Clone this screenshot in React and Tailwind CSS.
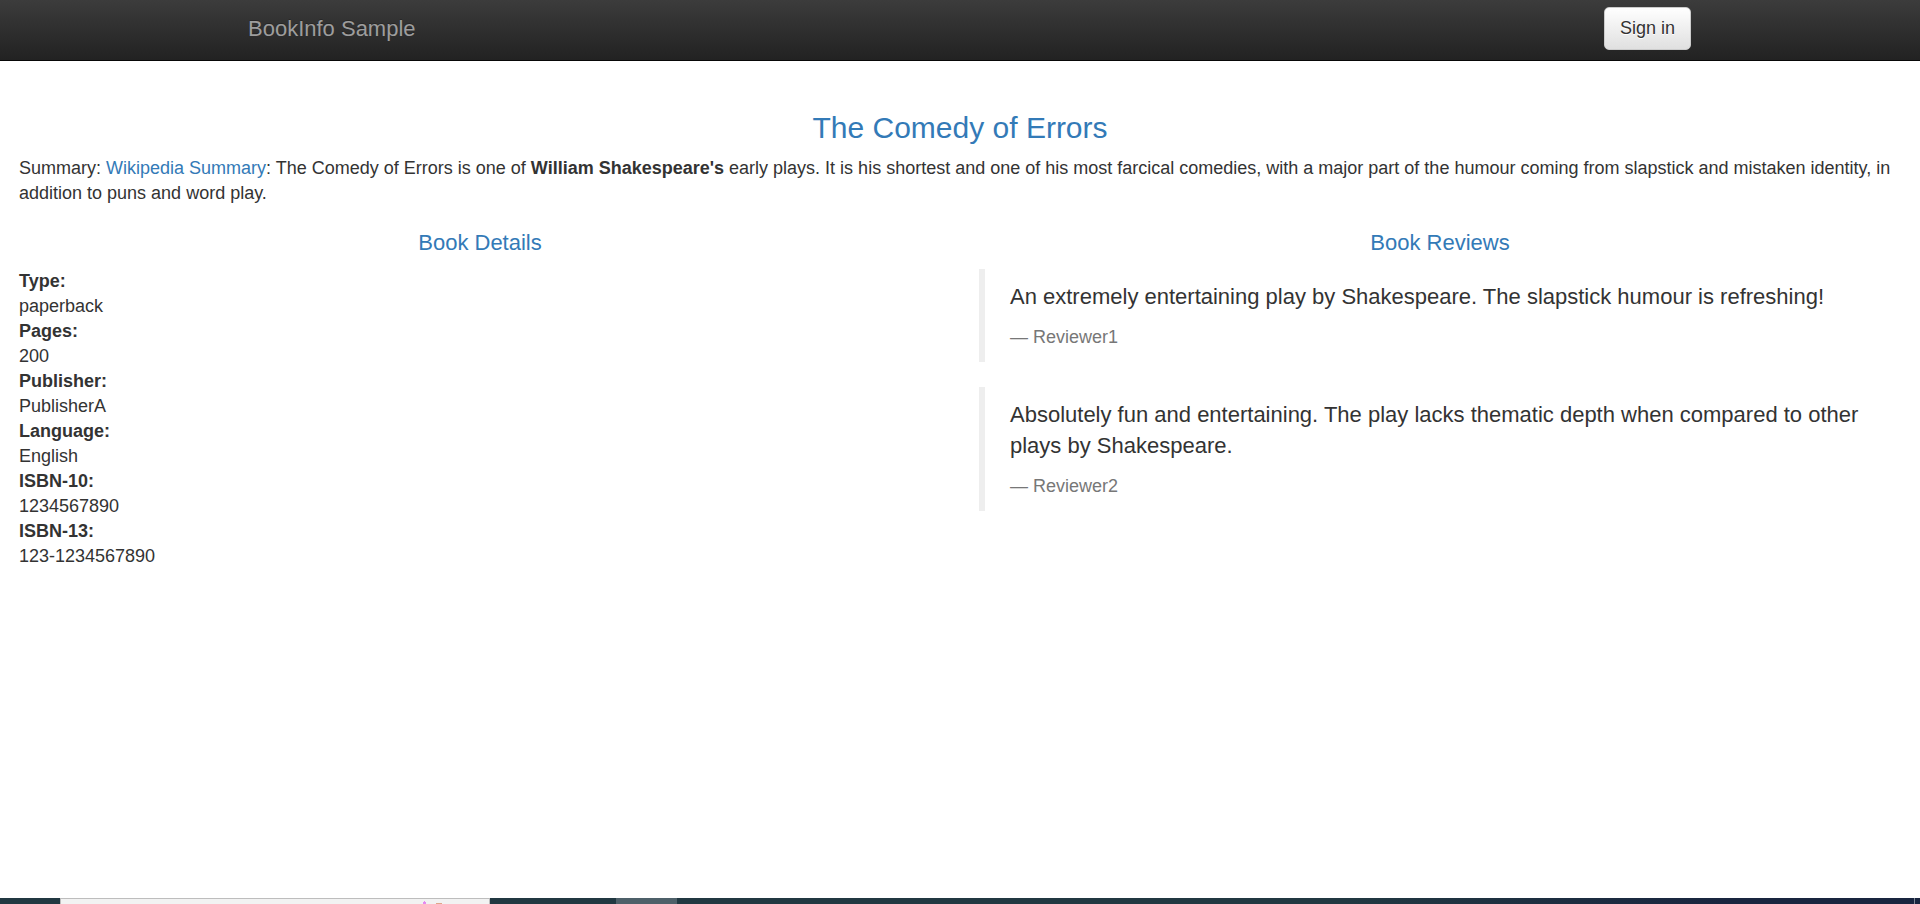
const details = [
  ['Type:', 'paperback'],
  ['Pages:', '200'],
  ['Publisher:', 'PublisherA'],
  ['Language:', 'English'],
  ['ISBN-10:', '1234567890'],
  ['ISBN-13:', '123-1234567890'],
];

const reviews = [
  {
    text: 'An extremely entertaining play by Shakespeare. The slapstick humour is refreshing!',
    author: 'Reviewer1',
  },
  {
    text: 'Absolutely fun and entertaining. The play lacks thematic depth when compared to other plays by Shakespeare.',
    author: 'Reviewer2',
  },
];

function Navbar() {
  return (
    <nav className="border-b border-[#080808] bg-linear-to-b from-[#3c3c3c] to-[#222222]">
      <div className="mx-auto flex h-[60px] max-w-[1462px] items-center justify-between pb-1 pl-[19px]">
        <a href="#" className="text-[22px] leading-[25px] text-[#9d9d9d] [text-shadow:0_-1px_0_rgba(0,0,0,0.25)]">
          BookInfo Sample
        </a>
        <button
          type="button"
          className="h-[43px] rounded-[5px] border border-[#cccccc] bg-linear-to-b from-white to-[#e0e0e0] px-[15px] text-[18px] leading-[25px] text-[#333333] [text-shadow:0_1px_0_#fff]"
        >
          Sign in
        </button>
      </div>
    </nav>
  );
}

function Review({ text, author }) {
  return (
    <blockquote className="border-l-[6px] border-[#eeeeee] px-[25px] py-3">
      <p className="mb-3 text-[22px] leading-[31px]">{text}</p>
      <small className="block text-[18px] leading-[26px] text-[#777777]">— {author}</small>
    </blockquote>
  );
}

function Taskbar() {
  return (
    <footer className="mt-auto flex h-[6px] overflow-hidden bg-linear-to-r from-[#213841] from-70% to-[#19253f] to-90%">
      <div className="ml-[60px] w-[430px] border-x border-t border-[#bdbdbd] bg-[#f2f2f2]">
        <svg className="block h-[5px] w-[428px]" viewBox="0 0 428 5" aria-hidden="true">
          <path d="M362 5V3h1V2h1v1h1v2z" fill="#e58bf0" />
          <path d="M375 5V4h6v1z" fill="#e0a58a" />
        </svg>
      </div>
      <div className="ml-[126px] w-[61px] bg-[#4e6069]" />
      <div className="mr-[5px] ml-auto w-px bg-[#7c8594]" />
    </footer>
  );
}

export default function App() {
  return (
    <div className="flex min-h-screen flex-col bg-white font-['Liberation_Sans',Arial,sans-serif] text-[18px] leading-[25px] text-[#333333]">
      <Navbar />
      <main className="px-[19px] pt-[50px]">
        <h3 className="mb-3 text-center text-[30px] leading-[33px] text-[#337ab7]">The Comedy of Errors</h3>
        <p className="mb-6">
          Summary:{' '}
          <a href="https://en.wikipedia.org/wiki/The_Comedy_of_Errors" className="text-[#337ab7]">
            Wikipedia Summary
          </a>
          : The Comedy of Errors is one of <b>William Shakespeare's</b> early plays. It is his shortest and one of his
          most farcical comedies, with a major part of the humour coming from slapstick and mistaken identity, in
          addition to puns and word play.
        </p>
        <div className="grid grid-cols-2 gap-[38px]">
          <section>
            <h4 className="mb-[14px] text-center text-[22px] leading-[25px] text-[#337ab7]">Book Details</h4>
            <dl>
              {details.map(([label, value]) => (
                <div key={label}>
                  <dt className="font-bold">{label}</dt>
                  <dd>{value}</dd>
                </div>
              ))}
            </dl>
          </section>
          <section>
            <h4 className="mb-[14px] text-center text-[22px] leading-[25px] text-[#337ab7]">Book Reviews</h4>
            <div className="flex flex-col gap-[25px]">
              {reviews.map((review) => (
                <Review key={review.author} {...review} />
              ))}
            </div>
          </section>
        </div>
      </main>
      <Taskbar />
    </div>
  );
}
